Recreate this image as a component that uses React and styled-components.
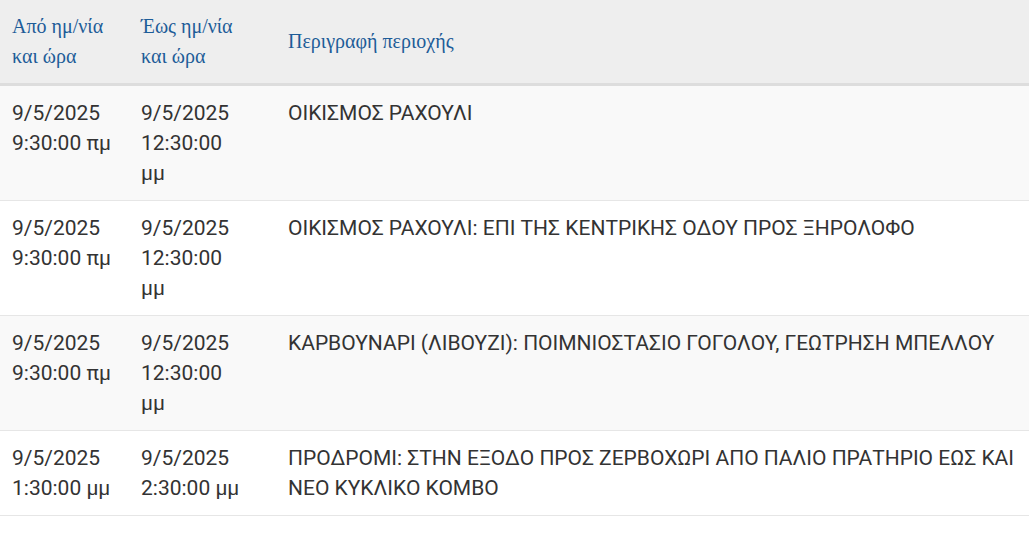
import styled, { createGlobalStyle } from 'styled-components';

const GlobalStyle = createGlobalStyle`
    body { margin: 0; background: #fff; }
`;

const rows = [
    { from: ['9/5/2025', '9:30:00 πμ'], to: ['9/5/2025', '12:30:00 μμ'], area: 'ΟΙΚΙΣΜΟΣ ΡΑΧΟΥΛΙ' },
    { from: ['9/5/2025', '9:30:00 πμ'], to: ['9/5/2025', '12:30:00 μμ'], area: 'ΟΙΚΙΣΜΟΣ ΡΑΧΟΥΛΙ: ΕΠΙ ΤΗΣ ΚΕΝΤΡΙΚΗΣ ΟΔΟΥ ΠΡΟΣ ΞΗΡΟΛΟΦΟ' },
    { from: ['9/5/2025', '9:30:00 πμ'], to: ['9/5/2025', '12:30:00 μμ'], area: 'ΚΑΡΒΟΥΝΑΡΙ (ΛΙΒΟΥΖΙ): ΠΟΙΜΝΙΟΣΤΑΣΙΟ ΓΟΓΟΛΟΥ, ΓΕΩΤΡΗΣΗ ΜΠΕΛΛΟΥ' },
    { from: ['9/5/2025', '1:30:00 μμ'], to: ['9/5/2025', '2:30:00 μμ'], area: 'ΠΡΟΔΡΟΜΙ: ΣΤΗΝ ΕΞΟΔΟ ΠΡΟΣ ΖΕΡΒΟΧΩΡΙ ΑΠΟ ΠΑΛΙΟ ΠΡΑΤΗΡΙΟ ΕΩΣ ΚΑΙ ΝΕΟ ΚΥΚΛΙΚΟ ΚΟΜΒΟ' }
];

function App() {
    return (
        <>
            <GlobalStyle />
            <Table>
                <colgroup>
                    <col style={{ width: 129 }} />
                    <col style={{ width: 147 }} />
                    <col />
                </colgroup>
                <thead>
                    <tr>
                        <Th>Από ημ/νία και ώρα</Th>
                        <Th $wide>Έως ημ/νία και ώρα</Th>
                        <Th>Περιγραφή περιοχής</Th>
                    </tr>
                </thead>
                <tbody>
                    {rows.map((r, i) => (
                        <Row key={i} $odd={i % 2 === 0}>
                            <Td>{r.from[0]} {r.from[1]}</Td>
                            <Td $wide>{r.to[0]} {r.to[1]}</Td>
                            <Td>{r.area}</Td>
                        </Row>
                    ))}
                </tbody>
            </Table>
        </>
    );
}

const Table = styled.table`
    width: 1029px;
    border-collapse: collapse;
    table-layout: fixed;
`;

const Th = styled.th`
    background: #eeeeee;
    border-bottom: 3px solid #dddddd;
    padding: 11px ${p => (p.$wide ? '30px' : '12px')} 12px 12px;
    text-align: left;
    vertical-align: middle;
    font-family: "Liberation Serif", "Times New Roman", serif;
    font-weight: normal;
    font-size: 20px;
    line-height: 30px;
    color: #1d5c98;
`;

const Row = styled.tr`
    background: ${p => (p.$odd ? '#f9f9f9' : '#ffffff')};
    border-bottom: 1px solid #e6e6e6;
`;

const Td = styled.td`
    padding: 12px ${p => (p.$wide ? '30px' : '12px')} 12px 12px;
    vertical-align: top;
    font-family: Roboto, "Noto Sans", sans-serif;
    font-size: 21px;
    line-height: 30px;
    color: #333333;
`;

export default App;
